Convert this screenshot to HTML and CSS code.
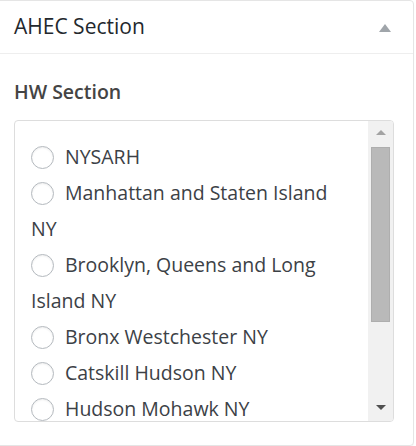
FILE: index.html
```html
<!DOCTYPE html>
<html>
<head>
<meta charset="utf-8">
<link rel="stylesheet" href="styles.css">
</head>
<body>
<div class="postbox">
  <div class="hndle">
    <span class="title">AHEC Section</span>
    <span class="toggle"></span>
  </div>
  <div class="inside">
    <div class="field-label">HW Section</div>
    <div class="listbox">
      <ul class="choices">
        <li><span class="radio"></span>NYSARH</li>
        <li><span class="radio"></span>Manhattan and Staten Island NY</li>
        <li><span class="radio"></span>Brooklyn, Queens and Long Island NY</li>
        <li><span class="radio"></span>Bronx Westchester NY</li>
        <li><span class="radio"></span>Catskill Hudson NY</li>
        <li><span class="radio"></span>Hudson Mohawk NY</li>
      </ul>
      <div class="scrollbar">
        <span class="arrow up"></span>
        <span class="thumb"></span>
        <span class="spacer"></span>
        <span class="arrow down"></span>
      </div>
    </div>
  </div>
</div>
</body>
</html>
```
FILE: styles.css
```css
html, body {
  margin: 0;
  padding: 0;
  background: #fff;
}
body {
  font-family: "Open Sans", "Liberation Sans", sans-serif;
  color: #32373c;
  overflow: hidden;
}
.postbox {
  margin-left: -1px;
  width: 413px;
  height: 444px;
  border: 1px solid #e5e5e5;
  border-radius: 0 4px 4px 0;
  background: #fff;
  box-shadow: 0 1px 1px rgba(0,0,0,0.04);
}
.hndle {
  height: 52px;
  border-bottom: 1px solid #eee;
  display: flex;
  align-items: center;
  justify-content: space-between;
  padding: 0 22px 0 14px;
}
.title {
  font-size: 21px;
  color: #23282d;
  line-height: 1;
  margin-top: -1px;
}
.toggle {
  width: 0;
  height: 0;
  border-left: 6px solid transparent;
  border-right: 6px solid transparent;
  border-bottom: 8px solid #a0a5aa;
  margin-top: 2px;
}
.inside {
  padding: 26px 0 0 14px;
}
.field-label {
  font-size: 19.5px;
  line-height: 24px;
  color: #444;
  font-weight: 600;
  height: 24px;
}
.listbox {
  margin-top: 16px;
  width: 378px;
  height: 300px;
  border: 1px solid #ddd;
  border-radius: 4px;
  display: flex;
  overflow: hidden;
}
.choices {
  flex: 1;
  list-style: none;
  margin: 0;
  padding: 18px 12px 0 16px;
  overflow: hidden;
}
.choices li {
  font-size: 19.5px;
  line-height: 36px;
  color: #3c4146;
}
.radio {
  display: inline-block;
  width: 21px;
  height: 21px;
  border: 1px solid #b4b9be;
  border-radius: 50%;
  box-shadow: inset 0 1px 2px rgba(0,0,0,0.07);
  vertical-align: -5px;
  margin-right: 11px;
  background: #fff;
}
.scrollbar {
  width: 25px;
  background: #f1f1f1;
  display: flex;
  flex-direction: column;
  align-items: center;
}
.arrow {
  width: 0;
  height: 0;
  border-left: 5px solid transparent;
  border-right: 5px solid transparent;
}
.arrow.up {
  border-bottom: 5px solid #a3a3a3;
  margin: 9px 0 12px;
}
.thumb {
  width: 19px;
  height: 175px;
  background: #b9b9b9;
  border: 1px solid #aeaeae;
  box-sizing: border-box;
}
.spacer {
  flex: 1;
}
.arrow.down {
  border-top: 5px solid #505050;
  margin-bottom: 11px;
}
```
